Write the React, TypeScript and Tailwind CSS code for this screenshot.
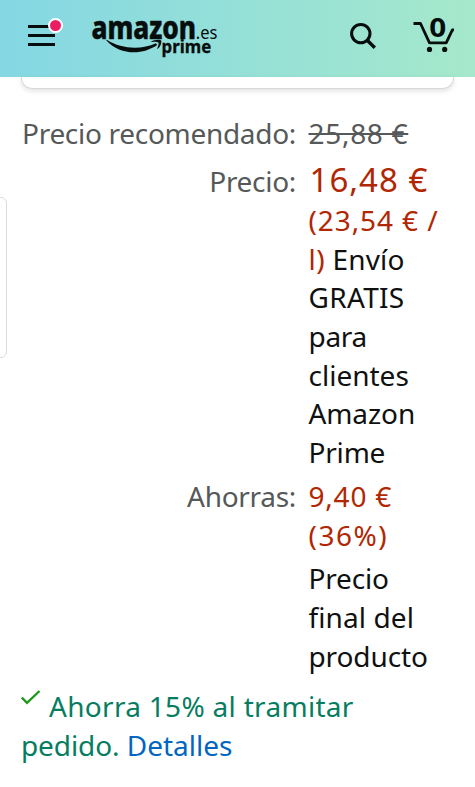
import React from 'react';

const Logo = () => (
  <svg width="130" height="44" viewBox="0 0 130 44" className="overflow-visible text-[#060d0d]" fill="currentColor">
    <text x="-0.500" y="23.500" fontSize="31.500" fontWeight="800" textLength="104.500" lengthAdjust="spacingAndGlyphs" stroke="currentColor" strokeWidth="0.500">
      amazon
    </text>
    <text x="103.800" y="23.500" fontSize="18.500" textLength="21.700" lengthAdjust="spacingAndGlyphs">
      .es
    </text>
    <text x="69.500" y="38.300" fontSize="18.500" fontWeight="700" textLength="49.700" lengthAdjust="spacingAndGlyphs" stroke="currentColor" strokeWidth="0.300">
      prime
    </text>
    <path d="M14.200 25.200C28 40.400 50 40.400 65.300 30L63.800 28.200C50 34.600 30 34.600 14.800 24.700Z" />
    <path d="M58.500 26.800C61.500 24.600 67.500 24 69.300 25.400C69.800 28.500 67.800 32.500 65.200 34.200C65.800 32 67.300 28.800 66.300 27.600C65 26.700 61 27.200 58.500 26.800Z" />
  </svg>
);

const Header = () => (
  <header className="flex h-[77px] shrink-0 items-start bg-linear-to-r from-[#84d7e3] to-[#a5e8cb]">
    <div className="relative mt-[25px] ml-7 flex w-[27px] flex-col gap-[6px]">
      <span className="h-[3px] bg-[#060d0d]" />
      <span className="h-[3px] bg-[#060d0d]" />
      <span className="h-[3px] bg-[#060d0d]" />
      <span className="absolute -top-[7px] left-5 size-[15px] rounded-full border-2 border-white bg-[#e91e63]" />
    </div>
    <div className="mt-[15px] ml-[37px]">
      <Logo />
    </div>
    <svg width="28" height="28" viewBox="0 0 28 28" className="mt-[22px] ml-[127px]" fill="none" stroke="#060d0d" strokeWidth="3">
      <circle cx="11.800" cy="11.600" r="9.200" />
      <path d="M18.200 18.300L25.800 25.800" strokeWidth="3.400" />
    </svg>
    <svg width="44" height="40" viewBox="0 0 44 40" className="mt-[15px] ml-[36px] overflow-visible" fill="none" stroke="#060d0d" strokeWidth="2.800">
      <path d="M0.500 8.500H7.500L16.500 27.800H33.200L39.400 14.800H41" strokeLinejoin="round" />
      <g fill="#060d0d" stroke="none">
        <circle cx="16.500" cy="34.400" r="2.600" />
        <circle cx="31.700" cy="34.400" r="2.600" />
        <text x="16.200" y="21.500" fontSize="26.500" fontWeight="700" textLength="17" lengthAdjust="spacingAndGlyphs">
          0
        </text>
      </g>
    </svg>
  </header>
);

type RowProps = {
  label?: string;
  children: React.ReactNode;
};

const PriceRow = ({ label, children }: RowProps) => (
  <div className="flex items-baseline">
    <div className="w-[296px] shrink-0 text-right tracking-[-0.3px] text-[#565959]">{label}</div>
    <div className="ml-[12.500px] whitespace-nowrap">{children}</div>
  </div>
);

export default function App() {
  return (
    <div className="relative flex h-[787px] w-full flex-col overflow-hidden bg-white font-['Noto_Sans',sans-serif] text-[28px] leading-[38.7px] text-[#0f1111]">
      <Header />

      {/* Bottom edge of the card above the prices */}
      <div className="mx-[21px] h-[12px] shrink-0 rounded-b-[11px] border border-t-0 border-[#d5d9d9] shadow-[0_2px_5px_rgba(15,17,17,0.12)]" />

      {/* Side drawer handle */}
      <div className="absolute top-[197px] -left-2 h-[161px] w-[14.500px] rounded-md border border-[#dcdcdc] bg-white" />

      <div className="mt-[25px] flex flex-col gap-[5px]">
        <PriceRow label="Precio recomendado:">
          <span className="tracking-[0.7px] text-[#565959] line-through">25,88 €</span>
        </PriceRow>
        <div className="pt-[3.500px]">
          <PriceRow label="Precio:">
            <div className="text-[#b12704]">
              <span className="ml-px text-[33px] tracking-[1px]">16,48 €</span>
              <br />
              <span className="tracking-[0.9px]">(23,54 € /</span>
              <br />
              <span className="tracking-[0.5px]">l)</span> <span className="tracking-[0.2px] text-[#0f1111]">Envío</span>
            </div>
            <span className="tracking-[0.3px]">GRATIS</span>
            <br />
            <span className="tracking-[-0.3px]">para</span>
            <br />
            clientes
            <br />
            <span className="tracking-[-0.1px]">Amazon</span>
            <br />
            <span className="tracking-[-0.2px]">Prime</span>
          </PriceRow>
        </div>
        <PriceRow label="Ahorras:">
          <div className="tracking-[0.8px] text-[#b12704]">
            9,40 €
            <br />
            <span className="tracking-[1.500px]">(36%)</span>
          </div>
        </PriceRow>
        <PriceRow>
          <span className="tracking-[-0.2px]">Precio</span>
          <br />
          <span className="tracking-[0.1px]">final del</span>
          <br />
          <span className="tracking-[-0.1px]">producto</span>
        </PriceRow>
      </div>

      <div className="mt-[12px] ml-[21px] whitespace-nowrap text-[#067d62]">
        <svg width="20" height="16" viewBox="0 0 20 16" className="mr-[8px] inline-block -translate-y-[11px] align-baseline" fill="none" stroke="#1f9a1f" strokeWidth="2.400">
          <path d="M0.800 7.500L6 12.800L18.500 1" />
        </svg>
        <span className="tracking-[0.3px]">Ahorra 15% al tramitar</span>
        <br />
        <span className="tracking-[-0.1px]">pedido.</span> <a className="text-[#0066c0]">Detalles</a>
      </div>
    </div>
  );
}
